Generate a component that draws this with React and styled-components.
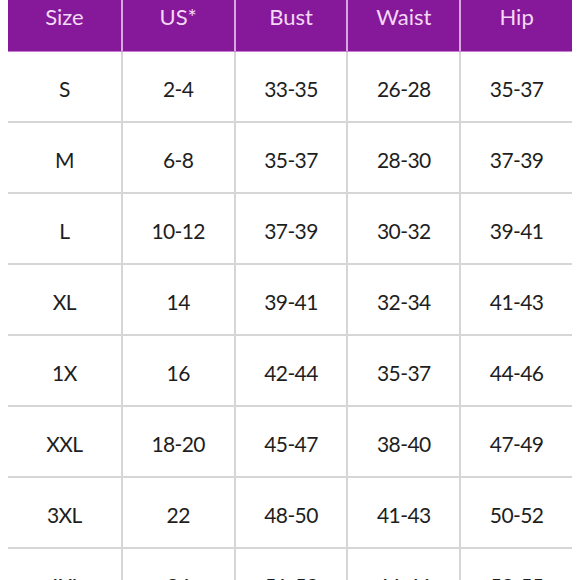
import React from 'react';
import styled, { createGlobalStyle } from 'styled-components';

const GlobalStyle = createGlobalStyle`
    html, body {
        margin: 0;
        padding: 0;
        background: #fff;
        overflow: hidden;
    }
`;

const Page = styled.div`
    width: 580px;
    height: 580px;
    overflow: hidden;
    padding: 0 8px;
    box-sizing: border-box;
    font-family: Lato, 'Open Sans', sans-serif;
`;

const HeadRow = styled.div`
    display: grid;
    grid-template-columns: repeat(5, 1fr);
    height: 52px;
    background: #86189a;
    border-bottom: 1px solid #c87fd2;
    box-sizing: border-box;
`;

const HeadCell = styled.div`
    display: flex;
    justify-content: center;
    padding-top: 3px;
    font-size: 22px;
    color: #f4d9f6;
    border-left: ${(p) => (p.first ? 'none' : '2px solid #d9a6e0')};
`;

const Row = styled.div`
    display: grid;
    grid-template-columns: repeat(5, 1fr);
    height: 71px;
    border-bottom: 2px solid #d6d6d6;
    box-sizing: border-box;
`;

const Cell = styled.div`
    display: flex;
    align-items: center;
    justify-content: center;
    padding-top: 3px;
    font-size: 21px;
    letter-spacing: -0.6px;
    color: #1e1e1e;
    border-left: ${(p) => (p.first ? 'none' : '2px solid #d6d6d6')};
`;

const headers = ['Size', 'US*', 'Bust', 'Waist', 'Hip'];

const rows = [
    ['S', '2-4', '33-35', '26-28', '35-37'],
    ['M', '6-8', '35-37', '28-30', '37-39'],
    ['L', '10-12', '37-39', '30-32', '39-41'],
    ['XL', '14', '39-41', '32-34', '41-43'],
    ['1X', '16', '42-44', '35-37', '44-46'],
    ['XXL', '18-20', '45-47', '38-40', '47-49'],
    ['3XL', '22', '48-50', '41-43', '50-52'],
    ['4XL', '24', '51-53', '44-46', '53-55'],
];

export default function App() {
    return (
        <Page>
            <GlobalStyle />
            <HeadRow>
                {headers.map((h, i) => (
                    <HeadCell key={h} first={i === 0}>
                        {h}
                    </HeadCell>
                ))}
            </HeadRow>
            {rows.map((r, ri) => (
                <Row key={ri}>
                    {r.map((c, ci) => (
                        <Cell key={ci} first={ci === 0}>
                            {c}
                        </Cell>
                    ))}
                </Row>
            ))}
        </Page>
    );
}
